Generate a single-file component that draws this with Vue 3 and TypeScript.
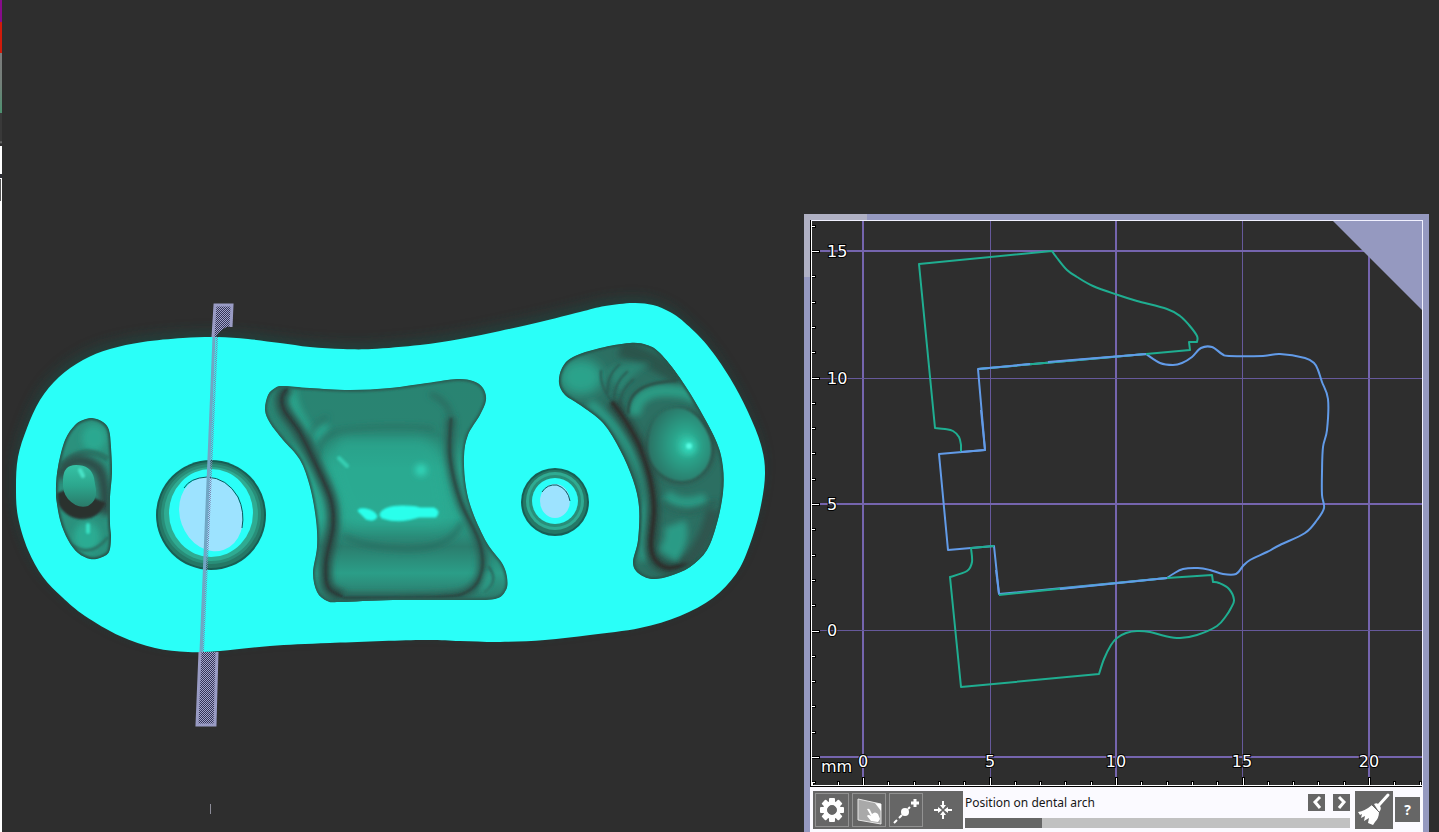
<script setup lang="ts">
import { ref, computed } from 'vue'

type Point = [number, number]

/* Catmull-Rom spline through the points, written as cubic path commands. */
function spline(points: Point[], closed = false): string {
  const n = points.length
  const at = (i: number): Point =>
    closed ? points[(i + n) % n] : points[Math.max(0, Math.min(n - 1, i))]
  let d = `M${points[0][0]} ${points[0][1]}`
  const segments = closed ? n : n - 1
  for (let i = 0; i < segments; i++) {
    const [a, b, c, e] = [at(i - 1), at(i), at(i + 1), at(i + 2)]
    d += `C${b[0] + (c[0] - a[0]) / 6} ${b[1] + (c[1] - a[1]) / 6} ${c[0] - (e[0] - b[0]) / 6} ${c[1] - (e[1] - b[1]) / 6} ${c[0]} ${c[1]}`
  }
  return closed ? d + 'Z' : d
}

const body = spline([
  [16, 487], [18, 457], [27, 428], [40, 400], [59, 377], [83, 360], [110, 349], [143, 342], [183, 338], [217, 337],
  [248, 339], [280, 343], [310, 347], [343, 349], [372, 349], [420, 345], [460, 339], [500, 331], [540, 322], [580, 312],
  [605, 306], [633, 303], [653, 305], [670, 312], [684, 322], [707, 345], [730, 378], [748, 412], [761, 445], [765, 474],
  [760, 510], [749, 547], [736, 574], [713, 598], [680, 616], [640, 628], [590, 635], [545, 640], [500, 642], [460, 641],
  [420, 640], [330, 643], [270, 646], [220, 651], [188, 652], [155, 648], [120, 636], [85, 616], [62, 597], [43, 577],
  [28, 550], [18, 517],
], true)

const leftPocket = spline([
  [92, 418], [103, 422], [109, 430], [111, 447], [112, 473], [110, 497], [110, 523], [111, 537], [109, 552], [100, 558],
  [90, 559], [78, 553], [68, 540], [60, 520], [56, 493], [58, 467], [65, 440], [75, 425], [83, 420],
], true)

const centrePocket = spline([
  [283, 386], [310, 388], [350, 390], [390, 388], [427, 383], [457, 379], [473, 381], [483, 388], [486, 400], [480, 415],
  [468, 435], [464, 457], [466, 487], [473, 513], [487, 543], [502, 563], [507, 577], [506, 590], [495, 599], [463, 600],
  [393, 600], [340, 602], [327, 601], [317, 592], [313, 573], [317, 547], [316, 520], [310, 487], [300, 460], [283, 440],
  [270, 423], [265, 410], [268, 395], [275, 388],
], true)

const centreValleyLeft = spline([
  [288, 387], [282, 397], [284, 410], [300, 433], [317, 467], [331, 500], [333, 527], [326, 562], [328, 587], [343, 597],
])
const centreValleyRight = spline([
  [451, 418], [450, 457], [460, 500], [479, 541], [482, 570], [470, 590], [440, 597], [343, 598],
])

const rightPocket = spline([
  [630, 343], [647, 345], [660, 353], [680, 378], [700, 410], [717, 443], [723, 467], [723, 493], [717, 523], [707, 550],
  [690, 567], [670, 576], [652, 579], [638, 573], [633, 562], [638, 540], [639, 507], [633, 480], [620, 450], [603, 423],
  [580, 405], [565, 395], [559, 383], [562, 368], [573, 357], [600, 348],
], true)
const rightValley = spline([
  [612, 402], [625, 420], [640, 447], [650, 478], [654, 510], [651, 545], [656, 561], [670, 568], [690, 562],
])

/* Section outlines, plotted in the same units as the grid. */
const upperSection = computed(
  () =>
    'M961 452V445' + spline([[961, 445], [959, 437], [953, 431], [945, 429], [935, 428]]).replace('M', 'L') +
    'L919 264L1052 251' +
    spline([[1052, 251], [1057, 258], [1067, 270], [1077, 277], [1093, 286], [1118, 295], [1137, 301], [1167, 309], [1180, 316], [1189, 325], [1197, 336], [1197, 342]]).replace('M', 'L') +
    'L1189 342L1190 350L1146 354L978 369',
)
const lowerSection = computed(
  () =>
    'M994 546L971 548' + spline([[971, 548], [972, 562], [967, 571], [950, 577]]).replace('M', 'L') +
    'L961 687L1099 674' +
    spline([[1099, 674], [1104, 659], [1111, 645], [1117, 638], [1126, 633], [1137, 631], [1150, 632], [1165, 636], [1180, 638], [1197, 635], [1217, 626], [1226, 616], [1231, 608], [1234, 600], [1229, 589], [1219, 583], [1213, 582]]).replace('M', 'L') +
    'L1212 575L1167 578L999 595',
)
const toothSection = computed(
  () =>
    'M939 454L948 550L994 546L999 594L1167 578' +
    spline([[1167, 578], [1173, 574], [1183, 569], [1198, 568], [1210, 570], [1223, 574], [1236, 574], [1243, 566], [1250, 560], [1267, 552], [1280, 545], [1305, 533], [1317, 520], [1324, 508], [1322, 495], [1322, 472], [1323, 447], [1327, 430], [1328, 399], [1322, 382], [1318, 370], [1314, 363], [1305, 358], [1280, 354], [1263, 356], [1229, 356], [1222, 354], [1212, 347], [1201, 348], [1192, 357], [1182, 363], [1173, 365], [1160, 363], [1146, 354]]).replace('M', 'L') +
    'L978 369L985 450Z',
)

const verticals = [
  { at: 863, wide: true, label: '0' },
  { at: 990, wide: false, label: '5' },
  { at: 1116, wide: true, label: '10' },
  { at: 1242, wide: false, label: '15' },
  { at: 1369, wide: true, label: '20' },
]
const horizontals = [
  { at: 251, wide: true, label: '15' },
  { at: 378, wide: false, label: '10' },
  { at: 504, wide: true, label: '5' },
  { at: 630, wide: false, label: '0' },
  { at: 757, wide: true, label: '' },
]
const spacing = 253 / 10
const xTicks = Array.from({ length: 25 }, (_, i) => i - 2).map((i) => ({
  at: Math.round(863 + i * spacing),
  size: i % 5 === 0 ? 7 : 3,
}))
const yTicks = Array.from({ length: 23 }, (_, i) => i - 1).map((i) => ({
  at: Math.round(251 + i * spacing),
  size: i % 5 === 0 ? 7 : 3,
}))
const teeth = [0, 45, 90, 135, 180, 225, 270, 315]

const position = ref(20)
const trackStyle = computed(() => ({ '--filled': `${position.value}%` }))
function move(step: number) {
  position.value = Math.min(100, Math.max(0, position.value + step))
}
</script>

<template>
  <main class="workspace">
    <aside class="edge" aria-hidden="true">
      <i class="purple"></i><i class="red"></i><i class="grey"></i><i class="gap"></i><i class="tab"></i><i class="slot"></i><i class="field"></i><i class="rest"></i>
    </aside>

    <svg class="model" viewBox="2 0 802 832" role="img" aria-label="Surgical guide model">
      <defs>
        <pattern id="mesh" width="2" height="2" patternUnits="userSpaceOnUse">
          <rect width="2" height="2" fill="#343456" />
          <rect width="1" height="1" fill="#a3a5cc" />
          <rect x="1" y="1" width="1" height="1" fill="#a3a5cc" />
        </pattern>
        <pattern id="meshLight" width="2" height="2" patternUnits="userSpaceOnUse">
          <rect width="1" height="1" fill="#7c84b0" />
          <rect x="1" y="1" width="1" height="1" fill="#7c84b0" />
        </pattern>
        <filter id="soft1" filterUnits="userSpaceOnUse" x="0" y="250" width="804" height="440"><feGaussianBlur stdDeviation="1" /></filter>
        <filter id="soft3" filterUnits="userSpaceOnUse" x="0" y="250" width="804" height="440"><feGaussianBlur stdDeviation="3" /></filter>
        <filter id="soft6" filterUnits="userSpaceOnUse" x="0" y="250" width="804" height="440"><feGaussianBlur stdDeviation="6" /></filter>
        <clipPath id="clipLeft"><path :d="leftPocket" /></clipPath>
        <clipPath id="clipCentre"><path :d="centrePocket" /></clipPath>
        <clipPath id="clipRight"><path :d="rightPocket" /></clipPath>
        <linearGradient id="centreTone" x1="0" y1="380" x2="0" y2="602" gradientUnits="userSpaceOnUse">
          <stop offset="0" stop-color="#298472" />
          <stop offset=".25" stop-color="#2a8472" />
          <stop offset=".4" stop-color="#2ba68d" />
          <stop offset=".62" stop-color="#2ba890" />
          <stop offset=".75" stop-color="#2b7e6e" />
          <stop offset=".87" stop-color="#2b9e88" />
          <stop offset="1" stop-color="#2d7567" />
        </linearGradient>
        <radialGradient id="bumpTone" cx=".6" cy=".5" r=".6">
          <stop offset="0" stop-color="#2fc9ab" />
          <stop offset=".35" stop-color="#2ca48b" />
          <stop offset="1" stop-color="#2b7264" />
        </radialGradient>
        <linearGradient id="knobTone" x1="0" y1="0" x2="0" y2="1">
          <stop offset="0" stop-color="#35c2a5" />
          <stop offset=".5" stop-color="#2ca68d" />
          <stop offset="1" stop-color="#2a7a69" />
        </linearGradient>
      </defs>

      <path :d="body" fill="#1f4a42" opacity=".6" filter="url(#soft6)" transform="translate(-2 -6)" />
      <path :d="body" fill="#2afff8" />

      <g clip-path="url(#clipLeft)">
        <path :d="leftPocket" fill="#2b917d" />
        <ellipse cx="94" cy="438" rx="12" ry="13" fill="#2ba890" filter="url(#soft3)" />
        <path d="M62 466Q82 443 108 459" fill="none" stroke="#2b7767" stroke-width="6" filter="url(#soft1)" />
        <path d="M58 478Q74 449 98 468Q106 478 105 515" fill="none" stroke="#2d4c46" stroke-width="11" filter="url(#soft3)" />
        <path d="M60 492Q68 512 84 512Q94 511 99 500" fill="none" stroke="#2c302f" stroke-width="15" filter="url(#soft1)" />
        <ellipse cx="87" cy="537" rx="13" ry="15" fill="#2cac93" filter="url(#soft3)" />
        <path d="M72 545Q91 559 108 537" fill="none" stroke="#2b7566" stroke-width="3" filter="url(#soft1)" />
        <path d="M63 480Q63 465 76 465Q91 465 94 478L96 490Q97 501 88 506Q77 509 68 499Q62 492 63 480Z" fill="url(#knobTone)" />
        <path d="M80 470L83 476" stroke="#49e3c7" stroke-width="4" stroke-linecap="round" filter="url(#soft1)" />
        <path d="M88 525V532" stroke="#37e0c3" stroke-width="4" stroke-linecap="round" filter="url(#soft1)" />
        <path :d="leftPocket" fill="none" stroke="#28574e" stroke-width="4" filter="url(#soft1)" />
      </g>

      <g clip-path="url(#clipCentre)">
        <path :d="centrePocket" fill="url(#centreTone)" />
        <path d="M290 389Q290 410 313 439" fill="none" stroke="#2ca48c" stroke-width="13" filter="url(#soft3)" />
        <path d="M272 397Q275 419 294 440" fill="none" stroke="#2a8573" stroke-width="10" filter="url(#soft3)" />
        <ellipse cx="320" cy="432" rx="11" ry="6" fill="#2ca18a" transform="rotate(-45 320 432)" filter="url(#soft3)" />
        <path d="M308 447Q309 424 328 417M319 457Q318 437 337 432Q385 424 434 429" fill="none" stroke="#296d60" stroke-width="3" filter="url(#soft3)" />
        <path d="M340 437H420Q440 440 442 470L449 512Q450 522 434 525H354Q338 504 328 460Z" fill="#2cad94" opacity=".65" filter="url(#soft6)" />
        <path d="M343 536Q370 549 410 549Q452 548 462 522" fill="none" stroke="#286b5e" stroke-width="4" filter="url(#soft3)" />
        <path :d="centreValleyLeft" fill="none" stroke="#2b4e47" stroke-width="12" filter="url(#soft3)" />
        <path d="M430 394Q451 401 452 425" fill="none" stroke="#2a665b" stroke-width="4" filter="url(#soft3)" />
        <path :d="centreValleyRight" fill="none" stroke="#2b5c53" stroke-width="9" filter="url(#soft3)" />
        <path :d="centreValleyLeft" fill="none" stroke="#2c3635" stroke-width="2" filter="url(#soft1)" />
        <path :d="centreValleyRight" fill="none" stroke="#2c413c" stroke-width="2" filter="url(#soft1)" />
        <path d="M488 566Q500 581 484 592" fill="none" stroke="#2b6c60" stroke-width="3" filter="url(#soft1)" />
        <path d="M487 574Q491 583 482 591" fill="none" stroke="#2da28b" stroke-width="4" filter="url(#soft3)" />
        <circle cx="421" cy="470" r="6" fill="#31d5b8" filter="url(#soft3)" />
        <path d="M339 458L347 466" stroke="#35cdb1" stroke-width="4" stroke-linecap="round" filter="url(#soft1)" />
        <path d="M358 511Q358 508 366 509Q376 511 377 517Q374 522 366 519ZM382 511Q388 506 402 506Q416 506 420 508H434Q441 511 436 517H419Q398 524 382 518Q378 515 382 511Z" fill="#2affeb" stroke="#2affeb" stroke-width="1" filter="url(#soft1)" />
        <path :d="centrePocket" fill="none" stroke="#295f55" stroke-width="4" filter="url(#soft1)" />
      </g>

      <g clip-path="url(#clipRight)">
        <path :d="rightPocket" fill="#2c6f62" />
        <ellipse cx="581" cy="377" rx="22" ry="18" fill="#2ba38b" filter="url(#soft6)" />
        <path d="M589 403Q616 422 635 457T645 510L643 561" fill="none" stroke="#2b9984" stroke-width="9" filter="url(#soft3)" />
        <path d="M620 348Q652 358 682 379" fill="none" stroke="#2c544c" stroke-width="17" filter="url(#soft3)" />
        <path d="M606 371Q622 360 651 364Q631 373 620 393Z" fill="#2b8573" filter="url(#soft3)" />
        <path d="M601 370Q599 387 614 404M608 393Q606 376 620 364M614 399Q614 383 628 371M620 405Q620 390 634 379" fill="none" stroke="#2a5b52" stroke-width="2" filter="url(#soft1)" />
        <path :d="rightValley" fill="none" stroke="#2c4641" stroke-width="12" filter="url(#soft3)" />
        <path :d="rightValley" fill="none" stroke="#2d302f" stroke-width="4" filter="url(#soft1)" />
        <path d="M635 415Q635 394 659 391Q684 389 696 398" fill="none" stroke="#2b9b84" stroke-width="12" filter="url(#soft3)" />
        <path d="M628 414Q627 389 656 383L677 380" fill="none" stroke="#2b5148" stroke-width="3" filter="url(#soft1)" />
        <path d="M666 495Q680 509 706 499" fill="none" stroke="#2a9a84" stroke-width="12" filter="url(#soft3)" />
        <path d="M662 500Q669 511 693 511L717 502" fill="none" stroke="#2b5149" stroke-width="3" filter="url(#soft3)" />
        <path d="M675 524Q680 538 668 556" fill="none" stroke="#2b9b86" stroke-width="22" filter="url(#soft3)" />
        <path d="M713 509Q709 538 686 565" fill="none" stroke="#2d544d" stroke-width="14" filter="url(#soft3)" />
        <ellipse cx="681" cy="446" rx="34" ry="37" fill="#2d4b45" filter="url(#soft3)" />
        <path d="M648 448Q648 417 666 410Q687 403 701 422Q719 446 706 468Q691 488 668 478Q650 469 648 448Z" fill="url(#bumpTone)" filter="url(#soft1)" />
        <circle cx="689" cy="447" r="7" fill="#30d6b9" filter="url(#soft3)" />
        <circle cx="689" cy="446" r="3" fill="#57fbe2" filter="url(#soft1)" />
        <path :d="rightPocket" fill="none" stroke="#28554c" stroke-width="4" filter="url(#soft1)" />
      </g>

      <g>
        <circle cx="211" cy="515" r="55" fill="#175e54" />
        <circle cx="211" cy="515" r="53" fill="#257866" />
        <circle cx="211" cy="514" r="50" fill="#298e79" />
        <circle cx="211" cy="514" r="47" fill="#2fab92" />
        <ellipse cx="211" cy="513" rx="42" ry="44" fill="#2afff8" />
        <ellipse cx="211" cy="514" rx="31" ry="38" fill="#9de3ff" transform="rotate(-20 211 514)" />
        <path d="M184 488Q190 478 207 477Q227 478 238 497Q245 512 242 528" fill="none" stroke="#08575b" stroke-width="1" />
        <circle cx="555" cy="502" r="34" fill="#175e54" />
        <circle cx="555" cy="502" r="32" fill="#257866" />
        <circle cx="555" cy="501" r="29" fill="#2fab92" />
        <circle cx="555" cy="501" r="26" fill="#298e79" />
        <circle cx="555" cy="501" r="23" fill="#2afff8" />
        <ellipse cx="555" cy="501" rx="15" ry="17" fill="#9de3ff" />
        <path d="M542 492Q547 484 557 485Q568 489 570 501" fill="none" stroke="#08575b" stroke-width="1" />
      </g>

      <g>
        <path d="M214 305H233L232 326Q221 327 216 337L213 337Z" fill="url(#mesh)" />
        <path d="M213 337L215 305H232L231 327" fill="none" stroke="#999bc4" stroke-width="3" />
        <path d="M216 337H218L204 652H201Z" fill="url(#meshLight)" />
        <path d="M214 337L201 652" stroke="#71a6c4" stroke-width="3" />
        <path d="M200 652H217L215 725H197Z" fill="url(#mesh)" />
        <path d="M200 652L197 725H215L217 652" fill="none" stroke="#999bc4" stroke-width="3" />
        <path d="M210.5 804V814" stroke="#8c8c98" stroke-width="1" />
      </g>
    </svg>

    <section class="panel" aria-label="Cross section">
      <svg class="plot" viewBox="810 220 613 567" role="img" aria-label="Cross section in millimetres">
        <rect x="810" y="220" width="613" height="567" fill="#2e2e2e" />
        <g shape-rendering="crispEdges">
          <rect v-for="line in verticals" :key="line.at" :x="line.wide ? line.at - 1 : line.at" y="221" :width="line.wide ? 2 : 1" height="558" :fill="line.wide ? '#7565ae' : '#66599b'" />
          <rect v-for="line in horizontals" :key="line.at" x="820" :y="line.wide ? line.at - 1 : line.at" width="602" :height="line.wide ? 2 : 1" :fill="line.wide ? '#7565ae' : '#66599b'" />
        </g>
        <g fill="none" stroke-width="2" stroke-linejoin="round">
          <path :d="toothSection" stroke="#629be8" />
          <path :d="upperSection" stroke="#1fae91" />
          <path :d="lowerSection" stroke="#1fae91" />
          <path d="M1048 362L1146 354M1060 589L1167 578M978 369L1030 364M961 452L985 450L981 410M999 594L996 570" stroke="#629be8" />
        </g>
        <path d="M1333 221H1422V310Z" fill="#9599c0" />
        <g shape-rendering="crispEdges">
          <rect x="810" y="220" width="1" height="567" fill="#000" />
          <rect x="810" y="786" width="613" height="1" fill="#000" />
          <rect v-for="tick in xTicks" :key="tick.at" :x="tick.at - 1" :y="784 - tick.size" width="3" :height="tick.size + 1" fill="#000" />
          <rect v-for="tick in yTicks" :key="tick.at" x="812" :y="tick.at - 1" :width="tick.size + 1" height="3" fill="#000" />
          <rect v-for="tick in xTicks" :key="tick.at" :x="tick.at" :y="785 - tick.size" width="1" :height="tick.size" fill="#fff" />
          <rect v-for="tick in yTicks" :key="tick.at" x="812" :y="tick.at" :width="tick.size" height="1" fill="#fff" />
          <rect x="811" y="220" width="1" height="566" fill="#fff" />
          <rect x="811" y="785" width="611" height="1" fill="#fff" />
          <rect x="811" y="220" width="612" height="1" fill="#f1f1ff" />
          <rect x="1422" y="220" width="1" height="567" fill="#f1f1ff" />
        </g>
        <g class="scale">
          <text v-for="line in horizontals" :key="line.at" x="827" :y="line.at + 6">{{ line.label }}</text>
          <text v-for="line in verticals" :key="line.at" :x="line.at" y="767" text-anchor="middle">{{ line.label }}</text>
          <text x="821" y="772">mm</text>
        </g>
      </svg>

      <div class="toolbar">
        <div class="tools">
          <button type="button" aria-label="Settings">
            <svg viewBox="0 0 32 32">
              <g fill="#fff">
                <rect v-for="angle in teeth" :key="angle" x="13" y="4" width="6" height="7" rx="1" :transform="`rotate(${angle} 16 16)`" />
              </g>
              <circle cx="16" cy="16" r="7" fill="none" stroke="#fff" stroke-width="4" />
            </svg>
          </button>
          <button type="button" aria-label="Drag section plane">
            <svg viewBox="0 0 32 32">
              <path d="M5 5L28 10V30L5 26Z" fill="#a9a9a9" stroke="#e6e6e6" stroke-width="1" />
              <path d="M22 9L28 10V17Z" fill="#fff" />
              <path d="M14 15Q16 14 17 16L19 20Q22 17 25 20L27 25L25 28L18 27L14 22Q15 20 18 22Z" fill="#fff" />
            </svg>
          </button>
          <button type="button" aria-label="Add point">
            <svg viewBox="0 0 32 32">
              <path d="M4 29L7 26M9 24L12 21M18 15L20 13" stroke="#fff" stroke-width="2" />
              <circle cx="15" cy="18" r="4" fill="#fff" />
              <path d="M21 9H29M25 5V13" stroke="#fff" stroke-width="3" />
            </svg>
          </button>
          <button class="plain" type="button" aria-label="Centre view">
            <svg viewBox="0 0 32 32" fill="#fff">
              <path d="M15 7H17V11H19L16 15L13 11H15ZM15 25H17V21H19L16 17L13 21H15ZM7 15V17H11V19L15 16L11 13V15ZM25 15V17H21V19L17 16L21 13V15Z" />
            </svg>
          </button>
        </div>

        <div class="arch">
          <div class="arch-head">
            <label for="arch-position">Position on dental arch</label>
            <span class="steps">
              <button type="button" aria-label="Previous" @click="move(-1)">
                <svg viewBox="0 0 17 17"><path d="M12 3L7 8L12 14" fill="none" stroke="#fff" stroke-width="3" /></svg>
              </button>
              <button type="button" aria-label="Next" @click="move(1)">
                <svg viewBox="0 0 17 17"><path d="M6 3L11 8L6 14" fill="none" stroke="#fff" stroke-width="3" /></svg>
              </button>
            </span>
          </div>
          <input id="arch-position" v-model.number="position" type="range" min="0" max="100" :style="trackStyle" />
        </div>

        <button class="clean" type="button" aria-label="Clear">
          <svg viewBox="0 0 38 38">
            <path d="M33 4L24 14" stroke="#fff" stroke-width="3" stroke-linecap="round" />
            <path d="M19 13Q23 11 25 15Q27 18 24 21Z" fill="#fff" />
            <path d="M17 14Q10 20 3 21L5 24L7 23L6 27L10 25L9 30L14 27L13 32L18 34L20 31Q24 27 24 21Z" fill="#fff" />
            <path d="M17 14L24 21" stroke="#666" stroke-width="1" />
          </svg>
        </button>
        <button class="help" type="button" aria-label="Help">?</button>
      </div>
    </section>
  </main>
</template>

<style>
body {
  margin: 0;
  background: #2e2e2e;
}
</style>

<style scoped>
.workspace {
  display: grid;
  grid-template-columns: 2px minmax(0, 802fr) minmax(0, 625fr);
  min-height: 100vh;
  padding-right: 10px;
  box-sizing: border-box;
  background: #2e2e2e;
  font-family: "Noto Sans", "Open Sans", sans-serif;
}
.edge {
  display: flex;
  flex-direction: column;
}
.edge i { display: block; }
.purple { height: 22px; background: #870c8b; }
.red { height: 31px; background: #d01b0b; }
.grey { height: 60px; background: linear-gradient(#7b7b7b, #74807a 50%, #4d9170); }
.gap { height: 33px; background: linear-gradient(#393939 28px, #777 29px, #2e2e2e 31px); }
.tab { height: 28px; background: #fff; }
.slot { height: 4px; background: #2e2e35; }
.field { height: 23px; background: linear-gradient(90deg, #555 1px, #fff 1px); border-top: 1px solid #fff; box-sizing: border-box; }
.rest { flex: 1; background: #fff; }
.model {
  display: block;
  width: 100%;
  align-self: center;
}
.panel {
  align-self: end;
  padding: 6px 6px 0;
  background:
    linear-gradient(#afb0c3, #afb0c3) 0 0 / 63px 6px no-repeat,
    linear-gradient(#afb0c3, #afb0c3) 0 0 / 6px 63px no-repeat,
    #9599c0;
}
.plot {
  display: block;
  width: 100%;
}
.scale {
  font: 16px "DejaVu Sans", sans-serif;
  fill: #fff;
  stroke: #000;
  stroke-width: 2px;
  paint-order: stroke;
}
.toolbar {
  display: flex;
  align-items: flex-start;
  gap: 2px;
  height: 45px;
  padding: 4px 3px;
  box-sizing: border-box;
  background: #fbfaff;
}
button {
  padding: 0;
  border: 0;
  background: #666;
  color: #fff;
}
button svg {
  display: block;
  width: 100%;
  height: 100%;
}
.tools {
  display: flex;
  gap: 3px;
  padding: 2px 3px 2px 2px;
  background: #666;
}
.tools button {
  flex: none;
  width: 34px;
  height: 34px;
  border: 1px solid #929292;
}
.tools .plain { border-color: #666; }
.arch {
  flex: 1;
  min-width: 0;
}
.arch-head {
  display: flex;
  justify-content: space-between;
  height: 27px;
}
label {
  color: #161616;
  font-size: 12px;
  line-height: 24px;
  white-space: nowrap;
}
.steps {
  display: flex;
  gap: 8px;
  padding-top: 3px;
}
.steps button {
  width: 17px;
  height: 17px;
}
input[type="range"] {
  display: block;
  width: 100%;
  height: 10px;
  margin: 0;
  appearance: none;
  background: linear-gradient(90deg, #666 var(--filled), #c1c1c1 var(--filled));
}
input[type="range"]::-webkit-slider-thumb {
  appearance: none;
  width: 1px;
  height: 10px;
}
.clean {
  width: 38px;
  height: 38px;
  margin-left: 3px;
}
.help {
  width: 25px;
  height: 25px;
  margin-top: 6px;
  font: bold 14px "Open Sans", sans-serif;
}
</style>
